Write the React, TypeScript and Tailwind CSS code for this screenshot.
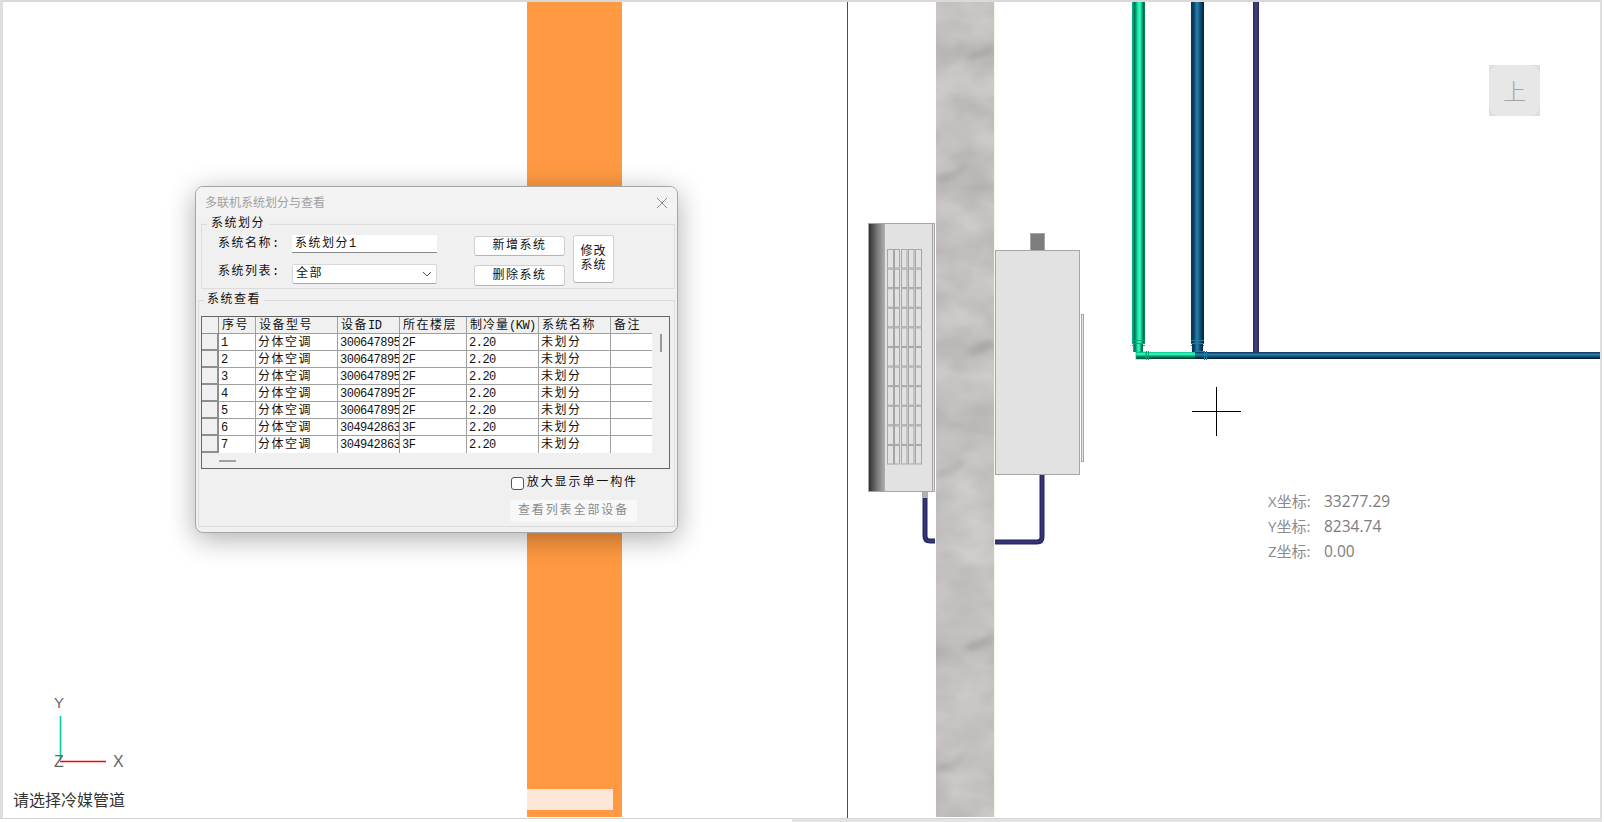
import React from "react";

const cjk = "font-['Liberation_Mono','Noto_Sans_CJK_SC',monospace]";

const rows = [
  ["1", "3006478951", "2F"],
  ["2", "3006478951", "2F"],
  ["3", "3006478951", "2F"],
  ["4", "3006478951", "2F"],
  ["5", "3006478951", "2F"],
  ["6", "3049428631", "3F"],
  ["7", "3049428631", "3F"],
];

const gridCols = "grid grid-cols-[17px_37px_82px_62px_67px_72px_72px_41px] h-[17px]";
const latin = "text-[12px] tracking-[-0.5px]";

function Head({ children, last }: { children?: React.ReactNode; last?: boolean }) {
  return (
    <div
      className={`border-b border-b-[#a0a0a0] bg-[#f0f0f0] pl-[3px] pt-[1px] text-[12px] leading-[16px] tracking-[1.5px] whitespace-nowrap overflow-hidden ${
        last ? "" : "border-r border-r-[#a0a0a0]"
      }`}
    >
      {children}
    </div>
  );
}

function Cell({
  children,
  mono,
  noLine,
  last,
}: {
  children?: React.ReactNode;
  mono?: boolean;
  noLine?: boolean;
  last?: boolean;
}) {
  return (
    <div
      className={`bg-white pl-[2px] pt-[1px] whitespace-nowrap overflow-hidden leading-[16px] ${
        last ? "" : "border-r border-r-[#a0a0a0]"
      } ${noLine ? "" : "border-b border-b-[#a0a0a0]"} ${mono ? "text-[12px] tracking-[-0.5px]" : "text-[12px] tracking-[1.5px]"}`}
    >
      {children}
    </div>
  );
}

function Btn({ children, className }: { children: React.ReactNode; className: string }) {
  return (
    <div
      className={`flex items-center justify-center rounded-[3px] border border-[#d0d0d0] border-b-[#b4b4b4] bg-white text-[12px] tracking-[1.5px] ${className}`}
    >
      {children}
    </div>
  );
}

function Dialog() {
  return (
    <div
      className={`absolute left-[195px] top-[186px] flex h-[347px] w-[483px] flex-col overflow-hidden rounded-[8px] border border-[#a6a6a6] bg-[#f0f0f0] text-[#111] shadow-[0_6px_28px_rgba(0,0,0,0.32)] ${cjk}`}
    >
      <div className="flex h-[30px] shrink-0 items-center justify-between bg-[#f3f3f3] pl-[9px] pr-[9px]">
        <span className="font-['Noto_Sans_CJK_SC',sans-serif] text-[12px] text-[#a0a0a0]">多联机系统划分与查看</span>
        <svg width="12" height="12" viewBox="0 0 12 12" className="mt-[1px]">
          <path d="M1 1L11 11M11 1L1 11" stroke="#8c8c8c" strokeWidth="1" fill="none" />
        </svg>
      </div>

      <div className="relative ml-[5px] mr-[2px] mt-[7px] h-[65px] shrink-0 border border-[#dcdcdc] pl-[16px] pt-[10px]">
        <span className="absolute left-[5px] top-[-8px] bg-[#f0f0f0] px-[4px] text-[12px] leading-[15px] tracking-[1.5px]">系统划分</span>
        <div className="flex">
          <div className="flex w-[219px] flex-col">
            <div className="flex h-[18px] items-center">
              <span className="w-[74px] text-[12px] tracking-[1.5px]">系统名称:</span>
              <div className="flex h-[18px] w-[145px] items-center border-b border-b-[#8a8a8a] bg-white pl-[3px] text-[12px] tracking-[1.5px]">
                系统划分<span className={latin}>1</span>
              </div>
            </div>
            <div className="mt-[11px] flex h-[20px] items-center">
              <span className="mb-[4px] w-[74px] text-[12px] tracking-[1.5px]">系统列表:</span>
              <div className="flex h-[20px] w-[145px] items-center justify-between rounded-[2px] border border-[#d8d8d8] border-b-[#a8a8a8] bg-white pl-[3px] pr-[4px] text-[12px] tracking-[1.5px]">
                全部
                <svg width="10" height="6" viewBox="0 0 10 6">
                  <path d="M1 1L5 5L9 1" stroke="#555" strokeWidth="1" fill="none" />
                </svg>
              </div>
            </div>
          </div>
          <div className="ml-[37px] flex flex-col pt-[1px]">
            <Btn className="h-[20px] w-[91px]">新增系统</Btn>
            <Btn className="mt-[9px] h-[21px] w-[91px]">删除系统</Btn>
          </div>
          <Btn className="ml-[8px] h-[48px] w-[41px] text-center leading-[14px]">
            <span className="w-[28px] tracking-[1px]">修改系统</span>
          </Btn>
        </div>
      </div>

      <div className="relative ml-[2px] mr-[2px] mt-[11px] h-[227px] shrink-0 border border-[#dcdcdc] pl-[2px] pt-[15px]">
        <span className="absolute left-[5px] top-[-8px] bg-[#f0f0f0] px-[3px] text-[12px] leading-[15px] tracking-[1.5px]">系统查看</span>
        <div className="flex h-[153px] w-[469px] flex-col border border-[#666] bg-[#f0f0f0]">
          <div className="flex">
            <div className="w-[450px]">
              <div className={gridCols}>
                <div className="border-r border-b border-[#8e8e8e] bg-[#f0f0f0]" />
                <Head>序号</Head>
                <Head>设备型号</Head>
                <Head>
                  设备<span className={latin}>ID</span>
                </Head>
                <Head>所在楼层</Head>
                <Head>
                  <span className="tracking-[1px]">制冷量</span>
                  <span className={latin}>(KW)</span>
                </Head>
                <Head>系统名称</Head>
                <Head last>备注</Head>
              </div>
              {rows.map((r, i) => (
                <div key={r[0]} className={gridCols}>
                  <div className="border-r-2 border-b-2 border-r-[#8e8e8e] border-b-[#8e8e8e] bg-[#f0f0f0]" />
                  <Cell mono noLine={i === 6}>{r[0]}</Cell>
                  <Cell noLine={i === 6}>分体空调</Cell>
                  <Cell mono noLine={i === 6}>{r[1]}</Cell>
                  <Cell mono noLine={i === 6}>{r[2]}</Cell>
                  <Cell mono noLine={i === 6}>2.20</Cell>
                  <Cell noLine={i === 6}>未划分</Cell>
                  <Cell noLine={i === 6} last />
                </div>
              ))}
            </div>
            <div className="pl-[8px] pt-[17px]">
              <div className="h-[18px] w-[2px] bg-[#999]" />
            </div>
          </div>
          <div className="pl-[17px] pt-[7px]">
            <div className="h-[2px] w-[17px] bg-[#a0a0a0]" />
          </div>
        </div>
        <div className="mt-[7px] flex h-[14px] items-center justify-end pr-[36px]">
          <div className="h-[13px] w-[13px] rounded-[3px] border border-[#555] bg-white" />
          <span className="ml-[3px] text-[12px] tracking-[1.9px]">放大显示单一构件</span>
        </div>
        <div className="mt-[10px] flex justify-end pr-[37px]">
          <div className="flex h-[22px] w-[127px] items-center justify-center rounded-[3px] bg-[#f8f8f8] text-[12px] tracking-[1.9px] text-[#8a8a8a]">
            查看列表全部设备
          </div>
        </div>
      </div>
    </div>
  );
}

const grilleRows = Array.from({ length: 11 }, (_, i) => 249.5 + i * 19.6);
const grilleCols: [number, number][] = [
  [887.5, 6.5],
  [894.5, 5],
  [901.5, 5.5],
  [908.5, 5.5],
  [915.5, 6],
];
const streaks = [0, 295, 590];

function Scene() {
  return (
    <svg className="absolute inset-0" width="1604" height="822" viewBox="0 0 1604 822">
      <defs>
        <linearGradient id="gv" x1="0" x2="1" y1="0" y2="0">
          <stop offset="0" stopColor="#00c690" />
          <stop offset="0.2" stopColor="#006f55" />
          <stop offset="0.42" stopColor="#10dd9e" />
          <stop offset="0.6" stopColor="#3bffc0" />
          <stop offset="0.8" stopColor="#0a9c74" />
          <stop offset="0.92" stopColor="#04523f" />
          <stop offset="1" stopColor="#00a87a" />
        </linearGradient>
        <linearGradient id="gh" x1="0" x2="0" y1="0" y2="1">
          <stop offset="0" stopColor="#00c690" />
          <stop offset="0.3" stopColor="#3bffc0" />
          <stop offset="0.6" stopColor="#0a9c74" />
          <stop offset="1" stopColor="#04301f" />
        </linearGradient>
        <linearGradient id="bv" x1="0" x2="1" y1="0" y2="0">
          <stop offset="0" stopColor="#0a3350" />
          <stop offset="0.2" stopColor="#08405f" />
          <stop offset="0.45" stopColor="#2a7fae" />
          <stop offset="0.75" stopColor="#0c4a6e" />
          <stop offset="1" stopColor="#041f32" />
        </linearGradient>
        <linearGradient id="bh" x1="0" x2="0" y1="0" y2="1">
          <stop offset="0" stopColor="#0a3350" />
          <stop offset="0.35" stopColor="#2a7fae" />
          <stop offset="0.7" stopColor="#0c4a6e" />
          <stop offset="1" stopColor="#03141f" />
        </linearGradient>
        <linearGradient id="pv" x1="0" x2="1" y1="0" y2="0">
          <stop offset="0" stopColor="#2a2860" />
          <stop offset="0.5" stopColor="#45417f" />
          <stop offset="1" stopColor="#2a2860" />
        </linearGradient>
        <linearGradient id="fan" x1="0" x2="1" y1="0" y2="0">
          <stop offset="0" stopColor="#303030" />
          <stop offset="0.5" stopColor="#777" />
          <stop offset="1" stopColor="#b0b0b0" />
        </linearGradient>
        <filter id="marble" x="0" y="0" width="100%" height="100%" colorInterpolationFilters="sRGB">
          <feTurbulence type="fractalNoise" baseFrequency="0.02 0.03" numOctaves="3" seed="7" />
          <feColorMatrix type="matrix" values="0.16 0 0 0 0.685  0.16 0 0 0 0.675  0.16 0 0 0 0.67  0 0 0 0 1" />
        </filter>
        <filter id="soft" x="-30%" y="-100%" width="160%" height="300%">
          <feGaussianBlur stdDeviation="3" />
        </filter>
        <clipPath id="wall">
          <rect x="936" y="2" width="58" height="815" />
        </clipPath>
      </defs>

      <rect x="527" y="2" width="95" height="815" fill="#ff9a42" />
      <rect x="527" y="789" width="86" height="21" fill="#fee7d7" />
      <rect x="847" y="2" width="1" height="816" fill="#f00" />

      <rect x="936" y="2" width="58" height="815" filter="url(#marble)" />
      <g clipPath="url(#wall)" filter="url(#soft)">
        {streaks.map((d) => (
          <g key={d} fill="#8f8c8c" opacity="0.55">
            <path d={`M966 ${56 + d}L994 ${44 + d}L994 ${52 + d}L968 ${60 + d}Z`} />
            <path d={`M936 ${176 + d}L952 ${174 + d}L966 ${164 + d}L964 ${168 + d}L950 ${179 + d}L936 ${181 + d}Z`} />
          </g>
        ))}
      </g>
      <rect x="994" y="2" width="1" height="815" fill="#f7f6ec" />

      <rect x="868.5" y="223.5" width="66" height="268" fill="#e2e2e2" stroke="#a6a6a6" />
      <rect x="869" y="224" width="16" height="267" fill="url(#fan)" />
      <path d="M932.5 224V491" stroke="#a6a6a6" />
      {grilleRows.map((y) => (
        <g key={y}>
          {grilleCols.map(([x, w]) => (
            <rect key={x} x={x} y={y} width={w} height={18.5} fill="#e2e2e2" stroke="#a6a6a6" />
          ))}
          <rect x="893" y={y} width="2" height="18.5" fill="#a6a6a6" />
        </g>
      ))}

      <rect x="995.5" y="250.5" width="84" height="224" fill="#e2e2e2" stroke="#a6a6a6" />
      <rect x="1030.5" y="233.5" width="14" height="17" fill="#7d7d7d" stroke="#a6a6a6" />
      <rect x="1081.5" y="314.5" width="2" height="147" fill="#e8e8e8" stroke="#a6a6a6" />

      <rect x="922" y="492" width="6" height="6" fill="#b0b0b0" />
      <path d="M925 498V536Q925 541 930 541H935" fill="none" stroke="#2a2868" strokeWidth="5" />
      <path d="M925 498V536Q925 541 930 541H935" fill="none" stroke="#45417f" strokeWidth="1" />
      <path d="M1042 475V537Q1042 542 1037 542H995" fill="none" stroke="#2a2868" strokeWidth="5" />
      <path d="M1042 475V537Q1042 542 1037 542H995" fill="none" stroke="#45417f" strokeWidth="1" />

      <rect x="1132" y="2" width="13" height="341" fill="url(#gv)" />
      <rect x="1132" y="340" width="13" height="1" fill="#00a87a" />
      <rect x="1132" y="343" width="13" height="1" fill="#00a87a" />
      <rect x="1132" y="345" width="13" height="1" fill="#00a87a" />
      <rect x="1133" y="344" width="10" height="8" fill="url(#gv)" />
      <rect x="1136" y="352" width="10" height="7" fill="url(#gh)" stroke="#00a87a" strokeWidth="0.6" />
      <rect x="1146" y="352" width="50" height="7" fill="url(#gh)" />
      <rect x="1146" y="351" width="1" height="9" fill="#00a87a" />
      <rect x="1148" y="351" width="1" height="9" fill="#00a87a" />

      <rect x="1191" y="2" width="13" height="341" fill="url(#bv)" />
      <rect x="1191" y="340" width="13" height="1" fill="#1e7ca8" />
      <rect x="1191" y="343" width="13" height="1" fill="#1e7ca8" />
      <rect x="1191" y="345" width="13" height="1" fill="#1e7ca8" />
      <rect x="1192" y="344" width="11" height="8" fill="url(#bv)" />
      <rect x="1195" y="352" width="405" height="7" fill="url(#bh)" />
      <rect x="1195" y="351" width="10" height="1" fill="#1e7ca8" />
      <rect x="1204" y="351" width="1" height="9" fill="#1e7ca8" />
      <rect x="1206" y="351" width="1" height="9" fill="#1e7ca8" />

      <rect x="1253" y="2" width="6" height="350" fill="url(#pv)" />

      <path d="M1216.5 387V436M1192 411.5H1241" stroke="#000" strokeWidth="1" />

      <path d="M60.5 716V760" stroke="#00d49a" strokeWidth="1.6" />
      <path d="M60 761.5H106" stroke="#f00" strokeWidth="1.6" />
    </svg>
  );
}

function Coord({ label, value }: { label: string; value: string }) {
  return (
    <div className="flex h-[25px] items-center">
      <span className="w-[56px] text-[15px] text-[#8a8a8a]">{label}</span>
      <span className="text-[15.5px] text-[#7c7c7c]">{value}</span>
    </div>
  );
}

export default function App() {
  return (
    <div className="relative h-[822px] w-[1604px] overflow-hidden bg-white">
      <div className="absolute left-0 top-0 h-[2px] w-[1602px] bg-[#d9d9d9]" />
      <div className="absolute bottom-[4px] left-0 top-0 w-[3px] bg-[#dedede]" />
      <div className="absolute right-[2px] top-0 h-[818px] w-[2px] bg-[#dedede]" />
      <div className="absolute left-0 top-[818px] h-[1px] w-[1602px] bg-[#d4d4d4]" />
      <div className="absolute left-[792px] top-[819px] h-[3px] w-[810px] bg-[#e4e4e4]" />

      <Scene />

      <Dialog />

      <div className="absolute left-[1489px] top-[65px] h-[51px] w-[51px] bg-[#dedede]">
        <div className="flex h-full w-full items-center justify-center rounded-[10px] bg-[#e7e7e7] font-['Noto_Sans_CJK_SC',sans-serif] text-[23px] font-light text-[#a4a4a4]">
          上
        </div>
      </div>

      <div className="absolute left-[1268px] top-[489px] font-['Open_Sans','Noto_Sans_CJK_SC',sans-serif]">
        <Coord label="X坐标:" value="33277.29" />
        <Coord label="Y坐标:" value="8234.74" />
        <Coord label="Z坐标:" value="0.00" />
      </div>

      <span className="absolute left-[54px] top-[694px] font-['Liberation_Sans',sans-serif] text-[15px] leading-[18px] text-[#666]">Y</span>
      <span className="absolute left-[54px] top-[753px] font-['Liberation_Sans',sans-serif] text-[16px] leading-[18px] text-[#666]">Z</span>
      <span className="absolute left-[113px] top-[753px] font-['Liberation_Sans',sans-serif] text-[16px] leading-[18px] text-[#666]">X</span>

      <span className="absolute left-[13px] top-[788px] font-['Noto_Sans_CJK_SC',sans-serif] text-[16px] leading-[22px] text-[#333]">请选择冷媒管道</span>
    </div>
  );
}
